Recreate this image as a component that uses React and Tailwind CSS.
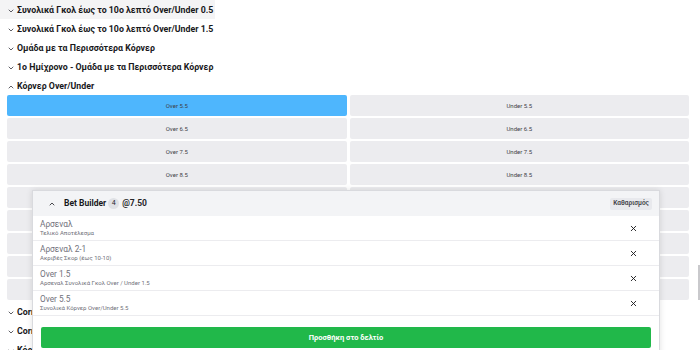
import { ChevronDown, ChevronUp, X } from "lucide-react";

const headers = [
  "Συνολικά Γκολ έως το 10ο λεπτό Over/Under 0.5",
  "Συνολικά Γκολ έως το 10ο λεπτό Over/Under 1.5",
  "Ομάδα με τα Περισσότερα Κόρνερ",
  "1ο Ημίχρονο - Ομάδα με τα Περισσότερα Κόρνερ",
];

const lines = ["5.5", "6.5", "7.5", "8.5", "9.5", "10.5", "11.5", "12.5", "13.5"];

const picks = [
  { title: "Αρσεναλ", sub: "Τελικό Αποτέλεσμα" },
  { title: "Αρσεναλ 2-1", sub: "Ακριβές Σκορ (έως 10-10)" },
  { title: "Over 1.5", sub: "Αρσεναλ Συνολικά Γκολ Over / Under 1.5" },
  { title: "Over 5.5", sub: "Συνολικά Κόρνερ Over/Under 5.5" },
];

const MarketHeader = ({ label, open, hover }) => (
  <div className="h-[19px] flex items-center">
    <div
      className={`h-full flex items-center gap-[2px] pl-[7px] pr-[2px] pt-[2px] ${
        hover ? "bg-[#f4f4f5]" : ""
      }`}
    >
      {open ? (
        <ChevronUp size={8} strokeWidth={2.5} className="text-zinc-700" />
      ) : (
        <ChevronDown size={8} strokeWidth={2.5} className="text-zinc-700" />
      )}
      <span className="text-[8.8px] font-bold text-zinc-900">{label}</span>
    </div>
  </div>
);

const BetBuilder = () => (
  <div className="absolute left-[32px] top-[190px] w-[628px] h-[170px] bg-white border border-[#d9dade] shadow-[0_0_6px_rgba(0,0,0,0.12)]">
    <div className="h-[25px] bg-[#f3f4f6] flex items-center justify-between pl-[15px] pr-[7px]">
      <div className="flex items-center">
        <ChevronUp size={8} strokeWidth={2.5} className="text-zinc-800" />
        <span className="ml-[8px] text-[8.5px] font-bold text-zinc-900">Bet Builder</span>
        <span className="ml-[2px] w-[11px] h-[11px] rounded-full bg-[#dfe1e5] flex items-center justify-center text-[7px] text-zinc-800">
          4
        </span>
        <span className="ml-[3px] text-[8.5px] font-bold text-zinc-800">@7.50</span>
      </div>
      <div className="h-[12px] px-[3px] bg-[#e8e9ed] rounded-[2px] flex items-center text-[6.5px] font-semibold text-zinc-700">
        Καθαρισμός
      </div>
    </div>
    {picks.map((p) => (
      <div
        key={p.title}
        className="h-[25px] flex items-center justify-between pl-[7px] pr-[21px] border-b border-[#ececef]"
      >
        <div className="flex flex-col leading-none">
          <span className="text-[8.3px] text-zinc-500">{p.title}</span>
          <span className="mt-[2px] text-[6px] text-zinc-500">{p.sub}</span>
        </div>
        <X size={9} strokeWidth={2.4} className="text-zinc-900" />
      </div>
    ))}
    <div className="px-[8px] pt-[11px]">
      <div className="h-[21px] rounded-[2px] bg-[#21b84a] flex items-center justify-center text-[7.5px] font-bold text-white">
        Προσθήκη στο δελτίο
      </div>
    </div>
  </div>
);

export default function App() {
  return (
    <div
      className="relative w-[700px] h-[350px] overflow-hidden bg-white"
      style={{ fontFamily: "Roboto, 'Noto Sans', sans-serif" }}
    >
      {headers.map((h, i) => (
        <MarketHeader key={h} label={h} hover={i === 0} />
      ))}
      <MarketHeader label="Κόρνερ Over/Under" open />
      <div className="pl-[7px] pr-[11px] grid grid-cols-2 gap-x-[3px] gap-y-[2px]">
        {lines.map((l, i) => [
          <div
            key={`o${l}`}
            className={`h-[21px] rounded-[2px] flex items-center justify-center text-[6px] text-zinc-700 ${
              i === 0 ? "bg-[#4eb6fd]" : "bg-[#ececef]"
            }`}
          >
            Over {l}
          </div>,
          <div
            key={`u${l}`}
            className="h-[21px] rounded-[2px] flex items-center justify-center text-[6px] text-zinc-700 bg-[#ececef]"
          >
            Under {l}
          </div>,
        ])}
      </div>
      <div className="h-[2px]" />
      <MarketHeader label="Corners Over/Under 1ο Ημίχρονο" />
      <MarketHeader label="Corners Handicap" />
      <MarketHeader label="Κόρνερ Μονά/Ζυγά" />
      <BetBuilder />
      <div className="absolute right-0 top-[265px] w-[2px] h-[35px] bg-[#c9c9cc]" />
    </div>
  );
}
